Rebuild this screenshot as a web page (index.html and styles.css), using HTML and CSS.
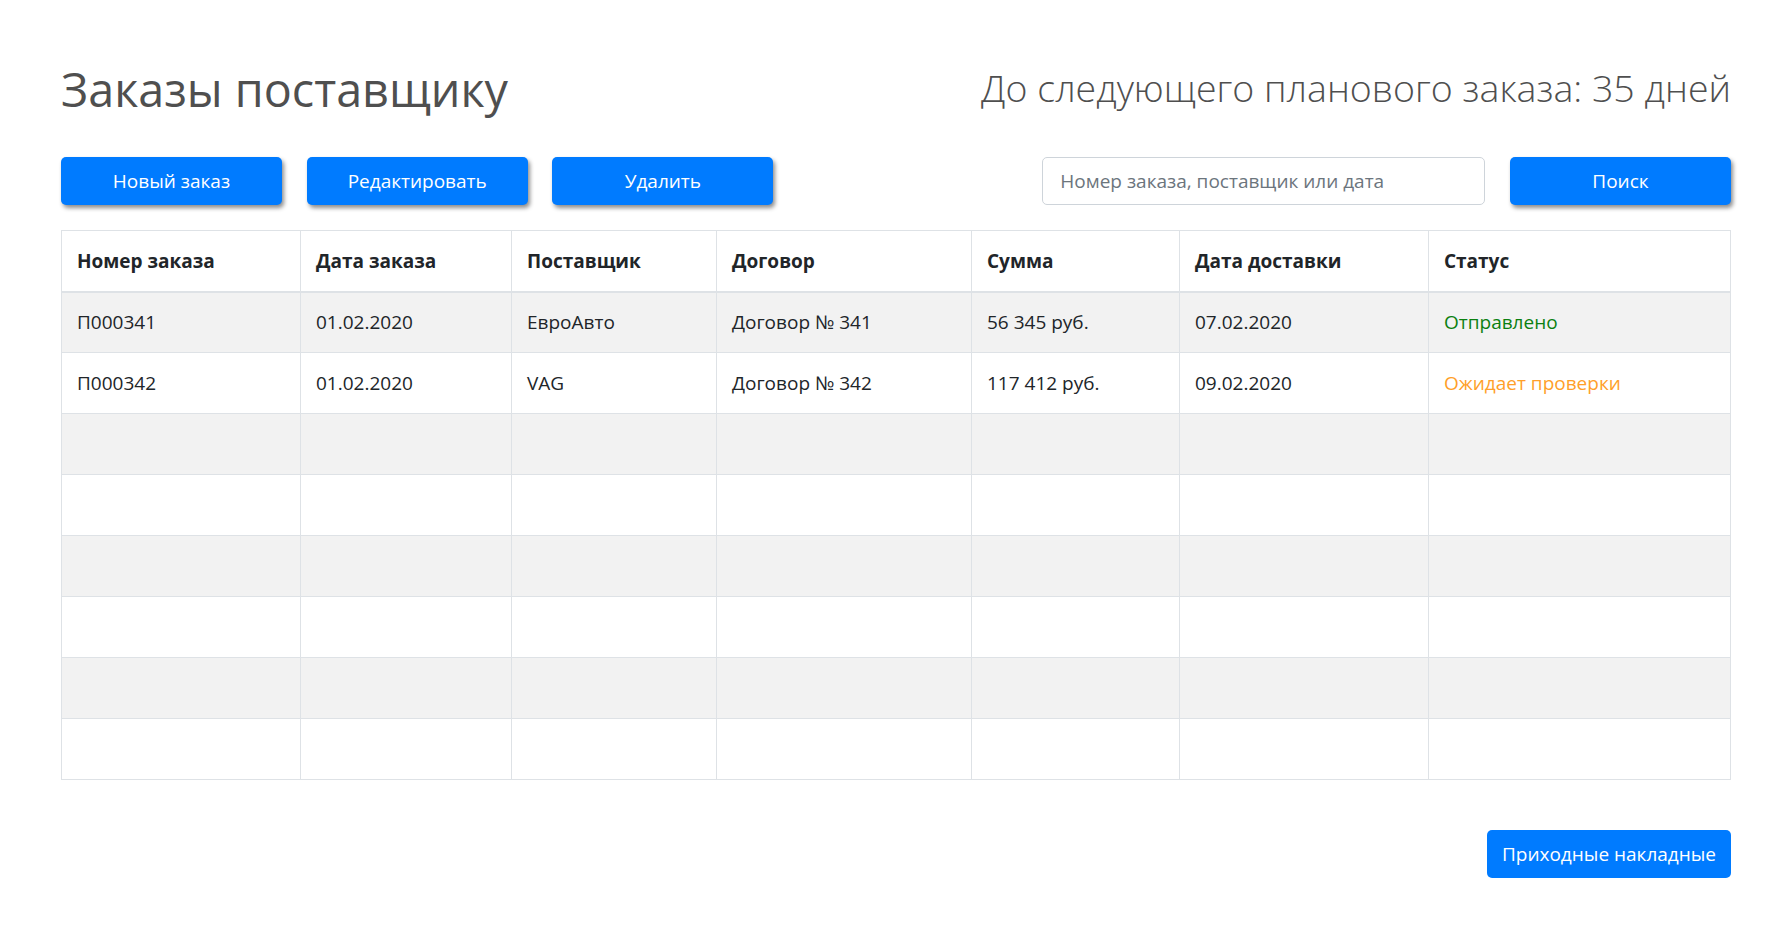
FILE: index.html
```html
<!DOCTYPE html>
<html lang="ru">
<head>
<meta charset="utf-8">
<title>Заказы поставщику</title>
<link rel="stylesheet" href="styles.css">
</head>
<body>
<div class="page">
  <header class="page-header">
    <h1 class="title">Заказы поставщику</h1>
    <div class="next-order">До следующего планового заказа: 35 дней</div>
  </header>

  <div class="toolbar">
    <button class="btn btn-shadow">Новый заказ</button>
    <button class="btn btn-shadow">Редактировать</button>
    <button class="btn btn-shadow">Удалить</button>
    <div class="spacer"></div>
    <input class="search" type="text" placeholder="Номер заказа, поставщик или дата">
    <button class="btn btn-shadow">Поиск</button>
  </div>

  <table class="orders">
    <colgroup>
      <col class="c1"><col class="c2"><col class="c3"><col class="c4"><col class="c5"><col class="c6"><col class="c7">
    </colgroup>
    <thead>
      <tr>
        <th>Номер заказа</th>
        <th>Дата заказа</th>
        <th>Поставщик</th>
        <th>Договор</th>
        <th>Сумма</th>
        <th>Дата доставки</th>
        <th>Статус</th>
      </tr>
    </thead>
    <tbody>
      <tr>
        <td>П000341</td>
        <td>01.02.2020</td>
        <td>ЕвроАвто</td>
        <td>Договор № 341</td>
        <td>56 345 руб.</td>
        <td>07.02.2020</td>
        <td class="status-sent">Отправлено</td>
      </tr>
      <tr>
        <td>П000342</td>
        <td>01.02.2020</td>
        <td>VAG</td>
        <td>Договор № 342</td>
        <td>117 412 руб.</td>
        <td>09.02.2020</td>
        <td class="status-wait">Ожидает проверки</td>
      </tr>
      <tr><td></td><td></td><td></td><td></td><td></td><td></td><td></td></tr>
      <tr><td></td><td></td><td></td><td></td><td></td><td></td><td></td></tr>
      <tr><td></td><td></td><td></td><td></td><td></td><td></td><td></td></tr>
      <tr><td></td><td></td><td></td><td></td><td></td><td></td><td></td></tr>
      <tr><td></td><td></td><td></td><td></td><td></td><td></td><td></td></tr>
      <tr><td></td><td></td><td></td><td></td><td></td><td></td><td></td></tr>
    </tbody>
  </table>

  <div class="footer-actions">
    <button class="btn btn-wide">Приходные накладные</button>
  </div>
</div>
</body>
</html>
```

FILE: styles.css
```css
* {
  box-sizing: border-box;
}

html, body {
  margin: 0;
  padding: 0;
  background: #ffffff;
}

body {
  font-family: "Open Sans", "Noto Sans", "Liberation Sans", sans-serif;
  font-size: 19px;
  line-height: 30px;
  color: #212529;
}

.page {
  padding: 62px 61px 0 61px;
}

.page-header {
  display: flex;
  justify-content: space-between;
  align-items: flex-start;
  height: 55px;
  margin-bottom: 40px;
}

.title {
  margin: 0;
  font-size: 46.7px;
  line-height: 55px;
  font-weight: 400;
  color: #4f4f4f;
}

.next-order {
  margin-top: 2px;
  font-size: 37.5px;
  line-height: 48px;
  font-weight: 300;
  color: #4f4f4f;
}

.toolbar {
  display: flex;
  align-items: center;
  gap: 24.7px;
  height: 48px;
}

.spacer {
  flex: 1;
}

.btn {
  height: 48px;
  border: 0;
  border-radius: 5px;
  background: #007bff;
  color: #ffffff;
  font-family: inherit;
  font-size: 19px;
  line-height: 30px;
  padding: 0 18px;
  cursor: pointer;
}

.btn-shadow {
  width: 221px;
  box-shadow: 2px 3px 4px rgba(0, 0, 0, 0.45);
}

.search {
  width: 443px;
  height: 48px;
  border: 1px solid #ced4da;
  border-radius: 5px;
  padding: 0 17px;
  font-family: inherit;
  font-size: 19px;
  color: #495057;
  background: #ffffff;
}

.search::placeholder {
  color: #6c757d;
}

.orders {
  width: 100%;
  margin-top: 25px;
  border-collapse: collapse;
  table-layout: fixed;
}

.c1 { width: 239px; }
.c2 { width: 211px; }
.c3 { width: 205px; }
.c4 { width: 255px; }
.c5 { width: 208px; }
.c6 { width: 249px; }
.c7 { width: auto; }

.orders th,
.orders td {
  border: 1px solid #dee2e6;
  padding: 0 15px;
  height: 61px;
  text-align: left;
  vertical-align: middle;
  white-space: nowrap;
}

.orders th {
  font-weight: 700;
  border-bottom: 2px solid #dee2e6;
}

.orders tbody tr:nth-child(odd) {
  background: #f2f2f2;
}

.status-sent {
  color: #0b8010;
}

.status-wait {
  color: #ff9f2a;
}

.footer-actions {
  display: flex;
  justify-content: flex-end;
  margin-top: 50px;
}

.btn-wide {
  width: 244px;
  padding: 0;
}
```
